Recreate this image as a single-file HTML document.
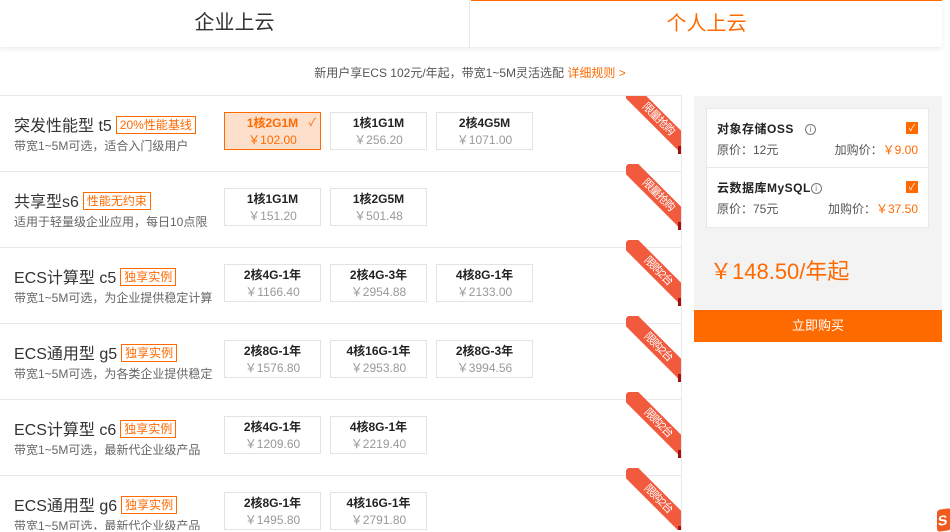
<!DOCTYPE html>
<html><head><meta charset="utf-8"><style>
*{margin:0;padding:0;box-sizing:border-box}
body{width:950px;height:530px;overflow:hidden;background:#fff;font-family:"Liberation Sans","Noto Sans CJK SC",sans-serif;position:relative}
.tabs{position:absolute;left:0;top:0;width:942px;height:47px;box-shadow:0 2px 4px rgba(0,0,0,.08);background:#fff}
.tab{position:absolute;top:0;height:47px;line-height:47px;text-align:center;font-size:20px;color:#333}
.t1{left:0;width:470px;border-right:1px solid #e8e8e8}
.t2{left:471px;width:471px;color:#ff6a00;border-top:1px solid #ff6a00}
.sub{position:absolute;top:64px;left:0;width:940px;text-align:center;font-size:12px;color:#555}
.sub span{color:#ff6a00}
.hl{position:absolute;left:0;top:95px;width:682px;height:1px;background:#e8e8e8}
.left{position:absolute;left:0;top:96px;width:682px;height:434px;border-right:1px solid #e8e8e8;overflow:hidden}
.row{position:absolute;left:0;width:682px;height:76px;border-bottom:1px solid #e8e8e8}
.tt{position:absolute;left:14px;top:16px;font-size:16px;color:#333;white-space:nowrap}
.tg{display:inline-block;font-size:12px;color:#ff6a00;border:1px solid #ff6a00;padding:0 3px;line-height:16px;vertical-align:2px;margin-left:4px}
.ds{position:absolute;left:14px;top:41px;font-size:12px;color:#666;white-space:nowrap;width:200px;overflow:hidden}
.bx{position:absolute;top:16px;width:97px;height:38px;border:1px solid #e3e3e3;text-align:center;background:#fff}
.bx b{display:block;font-size:12px;color:#222;margin-top:3px;line-height:15px}
.bx i{display:block;font-style:normal;font-size:12px;color:#999;margin-top:2px;line-height:15px}
.sel{background:#fde0cc;border-color:#ff6a00}
.sel b,.sel i{color:#ff6a00}
.rib{position:absolute;left:626px;top:-8px;width:62px;height:68px;overflow:hidden}
.rib div{position:absolute;left:-11px;top:23px;width:86px;height:16px;background:#f25a3e;color:#fff;font-size:11px;line-height:16px;text-align:center;transform:rotate(45deg);letter-spacing:-1px}
.rib:after{content:"";position:absolute;right:6px;bottom:2px;width:4px;height:8px;background:#a70f0f}
.rp{position:absolute;left:694px;top:96px;width:248px;height:246px;background:#f3f3f3}
.card{position:absolute;left:706px;width:223px;background:#fff;border:1px solid #e8e8e8}
.it{height:59px;position:relative;font-size:12px;color:#555}
.it .n{position:absolute;left:10px;top:11px;color:#222;font-weight:bold;letter-spacing:.5px}
.it .o{position:absolute;left:10px;top:32px}
.it .p{position:absolute;right:10px;top:32px}
.it .p span{color:#ff6a00}
.ck{position:absolute;right:10px;top:13px;width:12px;height:12px;background:#ff6a00;color:#fff;font-size:9px;line-height:12px;text-align:center}
.ic{display:inline-block;width:11px;height:11px;border:1px solid #777;border-radius:50%;font-size:8px;line-height:9px;text-align:center;color:#777;font-weight:normal;vertical-align:1px}
.total{position:absolute;left:710px;top:254px;font-size:22px;color:#ff6a00}
.btn{position:absolute;left:694px;top:310px;width:248px;height:32px;background:#ff6a00;color:#fff;font-size:13px;text-align:center;line-height:32px}
</style></head><body>
<div class="tabs"><div class="tab t1">企业上云</div><div class="tab t2">个人上云</div></div>
<div class="sub">新用户享ECS 102元/年起，带宽1~5M灵活选配 <span>详细规则 &gt;</span></div>
<div class="hl"></div>
<div class="left">
<div class="row" style="top:0"><div class="tt">突发性能型 t5<span class="tg">20%性能基线</span></div><div class="ds">带宽1~5M可选，适合入门级用户</div>
<div class="bx sel" style="left:224px"><b>1核2G1M</b><i>￥102.00</i><span style="position:absolute;right:4px;top:1px;color:#ff6a00;font-size:11px">✓</span></div><div class="bx" style="left:330px"><b>1核1G1M</b><i>￥256.20</i></div><div class="bx" style="left:436px"><b>2核4G5M</b><i>￥1071.00</i></div>
<div class="rib"><div>限量抢购</div></div></div>
<div class="row" style="top:76px"><div class="tt">共享型s6<span class="tg">性能无约束</span></div><div class="ds">适用于轻量级企业应用，每日10点限</div>
<div class="bx" style="left:224px"><b>1核1G1M</b><i>￥151.20</i></div><div class="bx" style="left:330px"><b>1核2G5M</b><i>￥501.48</i></div>
<div class="rib"><div>限量抢购</div></div></div>
<div class="row" style="top:152px"><div class="tt">ECS计算型 c5<span class="tg">独享实例</span></div><div class="ds">带宽1~5M可选，为企业提供稳定计算</div>
<div class="bx" style="left:224px"><b>2核4G-1年</b><i>￥1166.40</i></div><div class="bx" style="left:330px"><b>2核4G-3年</b><i>￥2954.88</i></div><div class="bx" style="left:436px"><b>4核8G-1年</b><i>￥2133.00</i></div>
<div class="rib"><div>限购2台</div></div></div>
<div class="row" style="top:228px"><div class="tt">ECS通用型 g5<span class="tg">独享实例</span></div><div class="ds">带宽1~5M可选，为各类企业提供稳定</div>
<div class="bx" style="left:224px"><b>2核8G-1年</b><i>￥1576.80</i></div><div class="bx" style="left:330px"><b>4核16G-1年</b><i>￥2953.80</i></div><div class="bx" style="left:436px"><b>2核8G-3年</b><i>￥3994.56</i></div>
<div class="rib"><div>限购2台</div></div></div>
<div class="row" style="top:304px"><div class="tt">ECS计算型 c6<span class="tg">独享实例</span></div><div class="ds">带宽1~5M可选，最新代企业级产品</div>
<div class="bx" style="left:224px"><b>2核4G-1年</b><i>￥1209.60</i></div><div class="bx" style="left:330px"><b>4核8G-1年</b><i>￥2219.40</i></div>
<div class="rib"><div>限购2台</div></div></div>
<div class="row" style="top:380px"><div class="tt">ECS通用型 g6<span class="tg">独享实例</span></div><div class="ds">带宽1~5M可选，最新代企业级产品</div>
<div class="bx" style="left:224px"><b>2核8G-1年</b><i>￥1495.80</i></div><div class="bx" style="left:330px"><b>4核16G-1年</b><i>￥2791.80</i></div>
<div class="rib"><div>限购2台</div></div></div>
</div>
<div class="rp"></div>
<div class="card" style="top:108px">
<div class="it" style="border-bottom:1px solid #e8e8e8"><span class="n">对象存储OSS &nbsp; <span class="ic">i</span></span><span class="ck">✓</span><span class="o">原价：12元</span><span class="p">加购价：<span>￥9.00</span></span></div>
<div class="it"><span class="n">云数据库MySQL<span class="ic">i</span></span><span class="ck">✓</span><span class="o">原价：75元</span><span class="p">加购价：<span>￥37.50</span></span></div>
</div>
<div class="total">￥148.50/年起</div>
<div class="btn">立即购买</div>
<div style="position:absolute;left:937px;top:509px;width:14px;height:22px;background:#f05a1e;border-radius:3px;transform:skewY(-8deg);color:#fff;font-weight:bold;font-size:14px;line-height:22px;padding-left:1px">S</div>
</body></html>
